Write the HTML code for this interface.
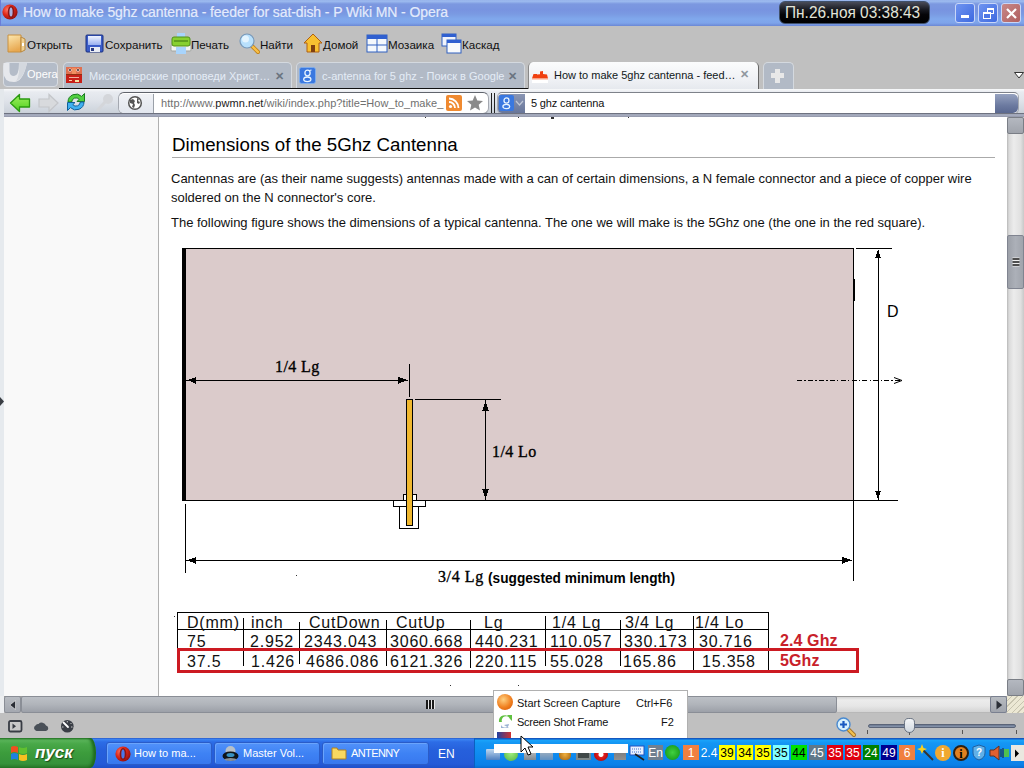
<!DOCTYPE html>
<html><head><meta charset="utf-8">
<style>
*{margin:0;padding:0;box-sizing:border-box}
html,body{width:1024px;height:768px;overflow:hidden;background:#c0c0c0;font-family:"Liberation Sans",sans-serif}
.a{position:absolute}
.nw{white-space:nowrap}
#title{left:0;top:0;width:1024px;height:26px;background:linear-gradient(#98b4ec 0,#9ab8ee 1.5px,#7c98e0 4px,#7894e0 10px,#7a9ae2 14px,#80a8ec 19px,#7ea4ea 23px,#6e8cd8 25.5px)}
#title .t{left:23px;top:4px;font-size:14px;color:#e4ecfc;letter-spacing:-0.1px;-webkit-text-stroke:0.2px #e0e8fc}
.wb{top:3px;width:20px;height:20px;border:1px solid #c8d6f8;border-radius:3px;background:linear-gradient(135deg,#6f94f0,#3e6ae0)}
#toolbar{left:0;top:26px;width:1024px;height:34px;background:#c0c0c0}
.tb{top:12px;font-size:11.6px;color:#101010}
#tabs{left:0;top:60px;width:1024px;height:29px;background:#c0c0c0}
.tab{top:2px;height:26px;border:1px solid #d4d9df;border-bottom:none;border-radius:5px 5px 0 0;background:#b2bac6}
.tab .tt{top:7px;font-size:11px;color:#e4ecf6}
.tab .x{top:7px;font-size:11px;font-weight:bold;color:#6a7480}
#addr{left:0;top:89px;width:1024px;height:28px;background:linear-gradient(#f8f9fa 0,#e8ebf0 3px,#e0e4ea 40%,#d0d6de 75%,#c2c8d2 100%)}
#page{left:0;top:117px;width:1007px;height:579px;background:#fff;overflow:hidden}
#side{left:0;top:0;width:159px;height:580px;background:#f9f9f9;border-right:1px solid #b0b0b0}
#vscroll{left:1007px;top:117px;width:17px;height:579px;background:linear-gradient(90deg,#b8b8b8 0,#dadada 2px,#ececec 40%,#e0e0e0 80%,#c8c8c8)}
#hscroll{left:0;top:696px;width:1024px;height:17px;background:#c0c0c0}
#status{left:0;top:713px;width:1024px;height:25px;background:#c0c0c0}
#task{left:0;top:738px;width:1024px;height:30px;background:linear-gradient(#2a5ac8 0,#3a82f2 1.5px,#2c6ce6 4px,#2660dc 12px,#245ad8 26px,#1e50c8 30px)}
.hd{font-size:18.7px;color:#000}
.p{font-size:13px;color:#111}
.td{font-size:16px;letter-spacing:0.8px;color:#111}
.ser{font-family:"Liberation Serif",serif;font-size:16px;color:#000;-webkit-text-stroke:0.35px #000}
.box{font-size:12px;height:15px;top:7px;text-align:center;line-height:17px;overflow:hidden}
</style></head><body>
<!-- TITLE -->
<div id="title" class="a">
 <div class="a" style="left:0;top:0;width:1px;height:26px;background:#6a7ed8"></div>
 <svg class="a" style="left:2px;top:4px" width="16" height="16"><defs><radialGradient id="ob" cx="0.35" cy="0.35" r="0.7"><stop offset="0" stop-color="#ff7a6a"/><stop offset="0.5" stop-color="#e02818"/><stop offset="1" stop-color="#901010"/></radialGradient></defs><circle cx="8" cy="8" r="7.6" fill="url(#ob)"/><ellipse cx="9" cy="8" rx="3.2" ry="6" fill="#8a1414"/><ellipse cx="9" cy="8" rx="1.6" ry="4.6" fill="#a8b0e0"/></svg>
 <div class="t a nw">How to make 5ghz cantenna - feeder for sat-dish - P Wiki MN - Opera</div>
 <div class="a" style="left:779px;top:1px;width:151px;height:23px;border-radius:6px;background:linear-gradient(#4a4c58,#1a1c24 35%,#050508 60%,#000 100%);border:1px solid #40506a"></div>
 <div class="a nw" style="left:785px;top:2.5px;font-size:16.6px;color:#e2e4d8;transform:scaleX(0.93);transform-origin:0 0">Пн.26.ноя 03:38:43</div>
 <div class="a wb" style="left:955px"><div class="a" style="left:5px;top:11px;width:8px;height:3px;background:#fff"></div></div>
 <div class="a wb" style="left:978px"><div class="a" style="left:8px;top:4px;width:7px;height:6px;border:1px solid #fff;border-top-width:2px"></div><div class="a" style="left:4px;top:8px;width:8px;height:7px;border:1px solid #fff;border-top-width:2px;background:#4e78e6"></div></div>
 <div class="a wb" style="left:1001px;background:linear-gradient(135deg,#c88888,#b06060)"><svg class="a" style="left:3px;top:3px" width="13" height="13"><path d="M2 2L11 11M11 2L2 11" stroke="#fff" stroke-width="2.2"/></svg></div>
</div>
<!-- TOOLBAR -->
<div id="toolbar" class="a">
 <svg class="a" style="left:6px;top:8px" width="20" height="20"><defs><linearGradient id="fd" x1="0" y1="0" x2="0.3" y2="1"><stop offset="0" stop-color="#fce8b0"/><stop offset="1" stop-color="#e8a850"/></linearGradient></defs><path d="M2 1H15V18H2Z" fill="url(#fd)" stroke="#c89040"/><path d="M15 3L19 5V16L15 18Z" fill="#f0d090" stroke="#b88840"/><rect x="16" y="9" width="2" height="3" fill="#fff"/></svg>
 <div class="a tb nw" style="left:27px">Открыть</div>
 <svg class="a" style="left:85px;top:8px" width="20" height="19"><defs><linearGradient id="fl" x1="0" y1="0" x2="0" y2="1"><stop offset="0" stop-color="#f0f4ff"/><stop offset="1" stop-color="#98b0f0"/></linearGradient></defs><rect x="1" y="1" width="17" height="17" rx="1" fill="#3a5cc8" stroke="#1a3080"/><rect x="3" y="2" width="13" height="9" fill="url(#fl)"/><rect x="5" y="13" width="10" height="5" fill="#e8ecf4"/><rect x="6" y="14" width="3" height="3" fill="#2a3a80"/></svg>
 <div class="a tb nw" style="left:105px">Сохранить</div>
 <svg class="a" style="left:170px;top:7px" width="22" height="21"><rect x="7" y="0" width="8" height="6" fill="#a8d4fc"/><rect x="1" y="12" width="20" height="6" rx="1" fill="#f4f4f0" stroke="#a0a4a0"/><rect x="2" y="4" width="18" height="9" rx="2" fill="#88d030" stroke="#509018"/><rect x="4" y="7" width="14" height="2" fill="#60a020"/><rect x="6" y="14" width="10" height="7" fill="#a8d4fc"/></svg>
 <div class="a tb nw" style="left:191px">Печать</div>
 <svg class="a" style="left:238px;top:6px" width="22" height="22"><path d="M14 14L20 20" stroke="#c08018" stroke-width="4" stroke-linecap="round"/><path d="M14 14L20 20" stroke="#f8c048" stroke-width="2.4" stroke-linecap="round"/><circle cx="9" cy="9" r="7" fill="#b8e0fc" stroke="#7898b8" stroke-width="1.2"/><circle cx="7.5" cy="7" r="3.5" fill="#e4f4fe"/></svg>
 <div class="a tb nw" style="left:260px">Найти</div>
 <svg class="a" style="left:303px;top:7px" width="20" height="20"><path d="M10 1L1 10H4V19H16V10H19Z" fill="#f8c030" stroke="#b06010"/><rect x="8" y="12" width="4" height="7" fill="#804010"/></svg>
 <div class="a tb nw" style="left:323px">Домой</div>
 <svg class="a" style="left:366px;top:8px" width="22" height="19"><rect x="1" y="1" width="20" height="17" fill="#f4f8fc" stroke="#3060c0"/><rect x="1" y="1" width="20" height="4" fill="#3060d0"/><path d="M11 5V18M1 11H21" stroke="#3060c0"/></svg>
 <div class="a tb nw" style="left:388px">Мозаика</div>
 <svg class="a" style="left:441px;top:7px" width="21" height="21"><rect x="1" y="1" width="14" height="12" fill="#f0f4fc" stroke="#3060c0"/><rect x="1" y="1" width="14" height="3" fill="#3060d0"/><rect x="6" y="7" width="14" height="13" fill="#f8fafc" stroke="#3060c0"/><rect x="6" y="7" width="14" height="3" fill="#3060d0"/></svg>
 <div class="a tb nw" style="left:462px">Каскад</div>
</div>
<!-- TABS -->
<div id="tabs" class="a">
 <div class="a" style="left:3px;top:2px;width:55px;height:25px;border:1px solid #d8dce2;border-radius:4px;background:#b4bcc8"></div>
 <svg class="a" style="left:3px;top:3px" width="24" height="20"><path d="M0.5 0V9Q0.5 19 11 19Q19 19 23 4L24 0H16Q16 13 11 13Q6.5 13 6.5 8V0Z" fill="#e6e8ec"/><path d="M16 0H24L23 4Q20 15 13 18.5Q17 12 16 0Z" fill="#d4d8de"/></svg>
 <div class="a nw" style="left:27px;top:8px;font-size:11px;color:#fff">Opera</div>
 <div class="a tab" style="left:63px;width:229px"><svg class="a" style="left:2px;top:4px" width="17" height="17"><rect width="16" height="16" fill="#c84028"/><rect x="0" y="0" width="16" height="8" fill="#e07050"/><rect x="6" y="1" width="4" height="7" fill="#f09060"/><circle cx="4" cy="3" r="1.6" fill="#fff"/><circle cx="12" cy="3" r="1.6" fill="#fff"/><circle cx="4" cy="3" r="0.9" fill="#200808"/><circle cx="12" cy="3" r="0.9" fill="#200808"/><rect x="0" y="8" width="16" height="8" fill="#c82018"/><rect x="3" y="10" width="10" height="1" fill="#f0b0a0"/><rect x="3" y="13" width="3" height="1" fill="#f8d0b0"/><rect x="9" y="13" width="4" height="2" fill="#f8e0a0"/><rect x="0" y="7" width="16" height="1" fill="#903010"/></svg><div class="a tt nw" style="left:25px">Миссионерские проповеди Христ…</div><div class="a x" style="left:211px">✕</div></div>
 <div class="a tab" style="left:296px;width:229px"><svg class="a" style="left:2px;top:4px" width="17" height="17"><rect x="0.5" y="0.5" width="16" height="16" rx="2" fill="#3a78e0" stroke="#80b0f0" stroke-width="0.8"/><ellipse cx="8.5" cy="6" rx="2.6" ry="2.8" fill="none" stroke="#e8f4ff" stroke-width="1.3"/><ellipse cx="8.3" cy="12.3" rx="3.6" ry="2.3" fill="none" stroke="#e8f4ff" stroke-width="1.3"/><path d="M10.5 3.5L12.5 3" stroke="#e8f4ff" stroke-width="1.2"/></svg><div class="a tt nw" style="left:25px">c-antenna for 5 ghz - Поиск в Google</div><div class="a x" style="left:211px">✕</div></div>
 <div class="a" style="left:59px;top:28px;width:470px;height:1px;background:#101010"></div>
 <div class="a" style="left:528px;top:2px;width:231px;height:27px;border-radius:5px 5px 0 0;background:linear-gradient(#fbfcfd,#eef0f4 70%,#e6e9ee);border-left:1px solid #888;border-right:1px solid #666"></div>
 <svg class="a" style="left:532px;top:10px" width="16" height="14"><rect x="0" y="8" width="16" height="5" fill="#fff"/><path d="M0 8.5L1.5 4H5V4.5L8 4.2V1.5L11 1V4L15 4.5L16 8.5Z" fill="#f04010"/><path d="M0 8.5H16V9.5H0Z" fill="#f8a080"/></svg>
 <div class="a nw" style="left:554px;top:9px;font-size:11px;color:#101820">How to make 5ghz cantenna - feed…</div>
 <div class="a" style="left:740px;top:8px;font-size:11px;font-weight:bold;color:#9098a0">✕</div>
 <div class="a" style="left:763px;top:2px;width:31px;height:27px;border:1px solid #d4d9df;border-bottom:none;border-radius:5px 5px 0 0;background:#b2bac6"></div>
 <div class="a" style="left:775px;top:9px;width:5px;height:14px;background:#e8e8e8"></div>
 <div class="a" style="left:771px;top:13px;width:13px;height:5px;background:#e8e8e8"></div>
 <svg class="a" style="left:1014px;top:12px" width="10" height="7"><path d="M0.5 0.5H9.5L5 6Z" fill="#fff" stroke="#333"/></svg>
</div>
<!-- ADDRESS -->
<div id="addr" class="a">
 <div class="a" style="left:0;top:0;width:4px;height:28px;background:#e4e8ec"></div>
 <svg class="a" style="left:9px;top:4px" width="24" height="20"><defs><linearGradient id="bk" x1="0" y1="0" x2="0" y2="1"><stop offset="0" stop-color="#a0f060"/><stop offset="1" stop-color="#50d020"/></linearGradient></defs><path d="M1.5 10L10.5 1.5V6H20.5V14H10.5V18.5Z" fill="url(#bk)" stroke="#2a9a10" stroke-width="1.3" stroke-linejoin="round"/></svg>
 <svg class="a" style="left:36px;top:4px" width="24" height="20"><path d="M22 10L13 1.5V6H3V14H13V18.5Z" fill="#d8dadd" stroke="#c4c6ca" stroke-width="1.2"/></svg>
 <svg class="a" style="left:66px;top:3px" width="20" height="20"><path d="M2 10A8 8 0 0 1 15.6 4.4L18.5 1.5V9.5H11L13.2 7.3A4.3 4.3 0 0 0 5.7 10Z" fill="#50d040" stroke="#1a7a20" stroke-width="1"/><path d="M18 10A8 8 0 0 1 4.4 15.6L1.5 18.5V10.5H9L6.8 12.7A4.3 4.3 0 0 0 14.3 10Z" fill="#40b0f0" stroke="#10609a" stroke-width="1"/></svg>
 <svg class="a" style="left:95px;top:3px" width="20" height="21"><circle cx="13" cy="7" r="5" fill="#d4d6da"/><path d="M10 10L2 19" stroke="#d4d6da" stroke-width="3"/></svg>
 <div class="a" style="left:118px;top:3px;width:371px;height:22px;border-radius:6px;background:#fff;border:1px solid #a4a8b0;border-top:1px solid #60646c"></div>
 <div class="a" style="left:119px;top:5px;width:35px;height:19px;border-radius:5px 0 0 5px;background:linear-gradient(#f0f2f6,#e2e6ee);border-right:1px solid #9aa0a8"></div>
 <svg class="a" style="left:127px;top:6px" width="16" height="16"><circle cx="8" cy="8" r="6.3" fill="#fff" stroke="#555" stroke-width="1.5"/><path d="M3 5L6 4L8 6L7 8L8 10L7 13L5 12L6 9L3 8Z" fill="#555"/><path d="M10 3L12 4L11 6L13 7L12 9L10 8Z" fill="#555"/></svg>
 <div class="a nw" style="left:161px;top:8px;font-size:11px;letter-spacing:0.05px;color:#707070">http://www.<span style="color:#202020">pwmn.net</span>/wiki/index.php?title=How_to_make_</div>
 <div class="a" style="left:446px;top:6px;width:16px;height:16px;border-radius:2px;background:#f08a30"></div>
 <svg class="a" style="left:446px;top:6px" width="16" height="16"><circle cx="4.5" cy="11.5" r="1.6" fill="#fff"/><path d="M3 7A6 6 0 0 1 9 13M3 3.5A9.5 9.5 0 0 1 12.5 13" fill="none" stroke="#fff" stroke-width="1.8"/></svg>
 <svg class="a" style="left:466px;top:5px" width="18" height="18"><path d="M9 1L11.3 6.5L17 7L12.7 10.8L14 16.5L9 13.5L4 16.5L5.3 10.8L1 7L6.7 6.5Z" fill="#8a8a8a"/></svg>
 <div class="a" style="left:491px;top:4px;width:1px;height:20px;background:#222"></div>
 <div class="a" style="left:494px;top:4px;width:1px;height:20px;background:#222"></div>
 <div class="a" style="left:497px;top:3px;width:522px;height:22px;border-radius:5px;background:#fff;border:1px solid #a4a8b0;border-top:1px solid #7e828a"></div>
 <div class="a" style="left:498px;top:5px;width:27px;height:19px;border-radius:4px 0 0 4px;background:linear-gradient(#8a96b4,#68769a)"></div>
 <svg class="a" style="left:499px;top:6px" width="16" height="16"><rect x="0" y="0" width="15" height="16" rx="2" fill="#3a78e0"/><ellipse cx="7.5" cy="5.5" rx="2.5" ry="2.6" fill="none" stroke="#e8f4ff" stroke-width="1.3"/><ellipse cx="7.3" cy="11.5" rx="3.4" ry="2.2" fill="none" stroke="#e8f4ff" stroke-width="1.3"/></svg>
 <svg class="a" style="left:515px;top:11px" width="9" height="6"><path d="M1 1L4.5 5L8 1" fill="none" stroke="#c0c8d8" stroke-width="1.2"/></svg>
 <div class="a nw" style="left:531px;top:8px;font-size:11px;letter-spacing:-0.15px;color:#101010">5 ghz cantenna</div>
 <div class="a" style="left:995px;top:5px;width:23px;height:19px;border-radius:0 5px 5px 0;background:linear-gradient(#96a2c0,#6c7aa0 60%,#5a6890)"></div>
 <div class="a" style="left:4px;top:24px;width:1020px;height:4px;background:linear-gradient(#6e7280 0,#6e7280 1px,#a0a6b8 1px,#a6abbe 3px,#8a8ea0 4px)"></div>
</div>
<!-- PAGE -->
<div id="page" class="a">
 <div id="side" class="a"></div>
 <div class="a" style="left:0;top:0;width:4px;height:580px;background:#e6eaee"></div>
 <svg class="a" style="left:0;top:280px" width="5" height="9"><path d="M0 0L4 4.5L0 9Z" fill="#3a3e44"/></svg>
 <div class="a hd nw" style="left:172px;top:17px">Dimensions of the 5Ghz Cantenna</div>
 <div class="a" style="left:172px;top:40px;width:823px;height:1px;background:#aaa"></div>
 <div class="a p nw" style="left:171px;top:54px">Cantennas are (as their name suggests) antennas made with a can of certain dimensions, a N female connector and a piece of copper wire</div>
 <div class="a p nw" style="left:171px;top:73px">soldered on the N connector's core.</div>
 <div class="a p nw" style="left:171px;top:98px">The following figure shows the dimensions of a typical cantenna. The one we will make is the 5Ghz one (the one in the red square).</div>
 <div class="a" style="left:410px;top:152px;width:1px;height:1px;background:#333"></div><div class="a" style="left:413px;top:155px;width:1px;height:1px;background:#333"></div><div class="a" style="left:668px;top:168px;width:1px;height:1px;background:#333"></div><div class="a" style="left:296px;top:458px;width:1px;height:1px;background:#333"></div><div class="a" style="left:174px;top:499px;width:1px;height:1px;background:#333"></div><div class="a" style="left:450px;top:568px;width:1px;height:1px;background:#333"></div><div class="a" style="left:518px;top:568px;width:1px;height:1px;background:#333"></div><div class="a" style="left:425px;top:0px;width:1px;height:1px;background:#333"></div><div class="a" style="left:518px;top:0px;width:1px;height:1px;background:#333"></div><div class="a" style="left:551px;top:0px;width:3px;height:2px;background:#333"></div><div class="a" style="left:628px;top:0px;width:1px;height:1px;background:#333"></div>
 <!-- DIAGRAM -->
 <svg class="a" style="left:0;top:0" width="1007" height="580" shape-rendering="crispEdges">
  <g transform="translate(0,-117)">
  <rect x="182" y="248" width="672" height="253" fill="#dbcbcb"/>
  <rect x="182" y="248" width="4" height="253" fill="#000"/>
  <rect x="182" y="248" width="672" height="1" fill="#000"/>
  <rect x="856" y="248" width="36" height="1" fill="#000"/>
  <rect x="853" y="249" width="1" height="332" fill="#000"/>
  <rect x="853" y="279" width="2" height="22" fill="#000"/>
  <rect x="182" y="500" width="716" height="1" fill="#000"/>
  <rect x="878" y="250" width="1" height="250" fill="#000"/>
  <path d="M875 258H881L878 250Z" fill="#000"/>
  <path d="M875 491H881L878 499Z" fill="#000"/>
  <path d="M797 380.5H902" stroke="#000" stroke-dasharray="5,2.2,1.5,2.2" stroke-width="1"/>
  <path d="M894 377.5L902 380.5L894 383.5" fill="none" stroke="#000" stroke-width="1" shape-rendering="auto"/>
  <rect x="186" y="380" width="222" height="1" fill="#000"/>
  <path d="M188 380L196 377V384Z" fill="#000"/>
  <path d="M407 380L398 377V384Z" fill="#000"/>
  <rect x="409" y="364" width="1" height="33" fill="#000"/>
  <rect x="415" y="399" width="86" height="1" fill="#000"/>
  <rect x="485" y="400" width="1" height="100" fill="#000"/>
  <path d="M482 411H489L485.5 401Z" fill="#000"/>
  <path d="M482 489H489L485.5 499Z" fill="#000"/>
  <rect x="403" y="494" width="13" height="7" fill="#fff" stroke="#000"/>
  <rect x="393.5" y="500.5" width="32" height="6" fill="#fff" stroke="#000"/>
  <rect x="399.5" y="506.5" width="19" height="22" fill="#fff" stroke="#000"/>
  <rect x="406.5" y="399.5" width="6" height="126" fill="#f0b830" stroke="#000"/>
  <rect x="185" y="504" width="1" height="69" fill="#000"/>
  <rect x="186" y="560" width="666" height="1" fill="#000"/>
  <path d="M187 560L196 557V564Z" fill="#000"/>
  <path d="M851 560L842 557V564Z" fill="#000"/>
  </g>
 </svg>
 <div class="a ser nw" style="left:275px;top:241px;letter-spacing:0.4px">1/4 Lg</div>
 <div class="a ser nw" style="left:492px;top:326px;letter-spacing:0.4px">1/4 Lo</div>
 <div class="a nw" style="left:887px;top:186px;font-size:16px;color:#000">D</div>
 <div class="a ser nw" style="left:438px;top:451px;letter-spacing:0.6px">3/4 Lg</div>
 <div class="a nw" style="left:488px;top:452px;font-size:15px;font-weight:bold;color:#000;transform:scaleX(0.912);transform-origin:0 0">(suggested minimum length)</div>
 <!-- TABLE -->
 <svg class="a" style="left:0;top:0" width="1007" height="580" shape-rendering="crispEdges">
  <g transform="translate(0,-117)" fill="#000">
  <rect x="177" y="612" width="592" height="1" />
  <rect x="178" y="629" width="590" height="1" />
  <rect x="177" y="612" width="1" height="60" />
  <rect x="243" y="618" width="1" height="48" />
  <rect x="299" y="622" width="1" height="42" />
  <rect x="386" y="620" width="1" height="46" />
  <rect x="470" y="620" width="1" height="48" />
  <rect x="545" y="616" width="1" height="50" />
  <rect x="620" y="620" width="1" height="46" />
  <rect x="693" y="616" width="1" height="56" />
  <rect x="768" y="612" width="1" height="60" />
  <rect x="693" y="671" width="76" height="1" />
  <rect x="177" y="648" width="682" height="3" fill="#cc1a22"/>
  <rect x="177" y="670" width="682" height="3" fill="#cc1a22"/>
  <rect x="177" y="648" width="3" height="25" fill="#cc1a22"/>
  <rect x="856" y="648" width="3" height="25" fill="#cc1a22"/>
  </g>
 </svg>
 <div class="a td nw" style="left:187px;top:497px">D(mm)</div>
 <div class="a td nw" style="left:251px;top:497px">inch</div>
 <div class="a td nw" style="left:309px;top:497px">CutDown</div>
 <div class="a td nw" style="left:396px;top:497px">CutUp</div>
 <div class="a td nw" style="left:484px;top:497px">Lg</div>
 <div class="a td nw" style="left:552px;top:497px">1/4 Lg</div>
 <div class="a td nw" style="left:625px;top:497px">3/4 Lg</div>
 <div class="a td nw" style="left:695px;top:497px">1/4 Lo</div>
 <div class="a td nw" style="left:187px;top:516px">75</div>
 <div class="a td nw" style="left:250px;top:516px">2.952</div>
 <div class="a td nw" style="left:304px;top:516px">2343.043</div>
 <div class="a td nw" style="left:390px;top:516px">3060.668</div>
 <div class="a td nw" style="left:475px;top:516px">440.231</div>
 <div class="a td nw" style="left:550px;top:516px">110.057</div>
 <div class="a td nw" style="left:624px;top:516px">330.173</div>
 <div class="a td nw" style="left:699px;top:516px">30.716</div>
 <div class="a td nw" style="left:187px;top:536px">37.5</div>
 <div class="a td nw" style="left:251px;top:536px">1.426</div>
 <div class="a td nw" style="left:306px;top:536px">4686.086</div>
 <div class="a td nw" style="left:390px;top:536px">6121.326</div>
 <div class="a td nw" style="left:475px;top:536px">220.115</div>
 <div class="a td nw" style="left:550px;top:536px">55.028</div>
 <div class="a td nw" style="left:623px;top:536px">165.86</div>
 <div class="a td nw" style="left:702px;top:536px">15.358</div>
 <div class="a nw" style="left:780px;top:514.5px;font-size:16px;font-weight:bold;letter-spacing:0.1px;color:#c8202a">2.4 Ghz</div>
 <div class="a nw" style="left:780px;top:535px;font-size:16px;font-weight:bold;letter-spacing:0.1px;color:#c8202a">5Ghz</div>
</div>
<!-- VSCROLL -->
<div id="vscroll" class="a">
 <div class="a" style="left:0;top:0;width:17px;height:17px;border-radius:2px;background:linear-gradient(#b4b8c0,#a0a4ac);border:1px solid #7a7e86"></div>
 <div class="a" style="left:0;top:118px;width:17px;height:54px;border-radius:2px;background:linear-gradient(90deg,#9ca0a8,#acb0b8 50%,#a0a4ac);border:1px solid #808490"></div>
 <svg class="a" style="left:4px;top:140px" width="10" height="10"><path d="M1.5 2H8.5M1.5 5H8.5M1.5 8H8.5" stroke="#f0f0f0" stroke-width="3"/><path d="M1.5 2H8.5M1.5 5H8.5M1.5 8H8.5" stroke="#1a1a1a" stroke-width="1.6"/></svg>
 <div class="a" style="left:0;top:562px;width:17px;height:17px;border-radius:2px;background:linear-gradient(#b4b8c0,#a0a4ac);border:1px solid #7a7e86"></div>
</div>
<!-- HSCROLL -->
<div id="hscroll" class="a">
 <div class="a" style="left:0;top:0;width:4px;height:17px;background:#eceef0"></div>
 <div class="a" style="left:4px;top:0;width:1003px;height:17px;background:linear-gradient(#d4d4d4,#ececec 20%,#e6e6e6 60%,#d4d4d4);border-top:1px solid #9a9a9a;border-bottom:1px solid #b8b8b8"></div>
 <div class="a" style="left:4px;top:0;width:17px;height:17px;border-radius:2px;background:linear-gradient(#b8bcc2,#a4a8b0);border:1px solid #8a8e96"></div>
 <svg class="a" style="left:9px;top:4px" width="8" height="10"><path d="M6.5 0.5V9.5L0.8 5Z" fill="#2a2e36" stroke="#f0f0f0" stroke-width="0.6"/></svg>
 <div class="a" style="left:21px;top:0;width:816px;height:17px;border-radius:2px;background:linear-gradient(#bcc0c6,#b0b4ba 50%,#9ca0a8);border:1px solid #8a8e96"></div>
 <div class="a" style="left:426px;top:4px;width:9px;height:9px;background:repeating-linear-gradient(90deg,#1a1a1a 0 2px,#e8e8e8 2px 3px)"></div>
 <div class="a" style="left:990px;top:0;width:17px;height:17px;border-radius:2px;background:linear-gradient(#b8bcc2,#a0a4ac);border:1px solid #7a8090"></div>
 <svg class="a" style="left:995px;top:4px" width="8" height="10"><path d="M1.5 0.5V9.5L7.2 5Z" fill="#2a2e36"/></svg>
 <div class="a" style="left:1007px;top:0;width:17px;height:17px;background:repeating-linear-gradient(135deg,#ece8d4 0 3px,#c8c4b0 3px 4px)"></div>
</div>
<!-- STATUS -->
<div id="status" class="a">
 <svg class="a" style="left:8px;top:7px" width="15" height="13"><rect x="1" y="1" width="12.5" height="10.5" rx="1.5" fill="#c8c8c8" stroke="#383c44" stroke-width="1.8"/><path d="M4.5 3.5V9L8 6.2Z" fill="#383c44"/></svg>
 <svg class="a" style="left:33px;top:7px" width="16" height="12"><path d="M3.5 11A3 3 0 0 1 2.5 5.5A2.8 2.8 0 0 1 5.5 4A4.5 4.5 0 0 1 13 5.5A2.8 2.8 0 0 1 13 11Z" fill="#4a5058"/></svg>
 <svg class="a" style="left:60px;top:6px" width="15" height="15"><circle cx="7.3" cy="7.3" r="6.3" fill="#3a3e46"/><path d="M3.5 3.5L8 8" stroke="#fff" stroke-width="1.8" stroke-linecap="round"/><path d="M7.3 2V3.5M11.5 4L10.5 5M12.5 8H11M2 8H3.5" stroke="#c8c8c8" stroke-width="1"/></svg>
 <svg class="a" style="left:835px;top:3px" width="22" height="22"><path d="M13 13L19 19" stroke="#a07020" stroke-width="4" stroke-linecap="round"/><path d="M13 13L19 19" stroke="#f0c050" stroke-width="2.4" stroke-linecap="round"/><circle cx="8.5" cy="8.5" r="6.5" fill="#d8f0fc" stroke="#4a8ad0" stroke-width="1.4"/><path d="M5 8.5H12M8.5 5V12" stroke="#1a5ac0" stroke-width="2.2"/></svg>
 <div class="a" style="left:868px;top:11px;width:148px;height:4px;border-radius:2px;background:linear-gradient(#6a7890,#8a98b0);border:1px solid #5a6478"></div>
 <div class="a" style="left:867px;top:17px;width:1px;height:4px;background:#555"></div>
 <div class="a" style="left:1016px;top:17px;width:1px;height:4px;background:#555"></div><div class="a" style="left:962px;top:17px;width:1px;height:4px;background:#555"></div><div class="a" style="left:909px;top:19px;width:1px;height:3px;background:#555"></div>
 <div class="a" style="left:904px;top:5px;width:11px;height:15px;border-radius:5px 5px 6px 6px;background:linear-gradient(#f4f6f8,#d0d8e0);border:1px solid #6a7484"></div>
</div>
<!-- MENU -->
<div class="a" style="left:493px;top:690px;width:195px;height:60px;background:#fff;border:1px solid #b0b0b0"></div>
<div class="a" style="left:497px;top:694px;width:16px;height:16px;border-radius:50%;background:radial-gradient(circle at 40% 35%,#ffd080,#f08020 55%,#d05000)"></div>
<div class="a nw" style="left:517px;top:697px;font-size:11px;color:#111">Start Screen Capture</div>
<div class="a nw" style="left:636px;top:697px;font-size:11px;color:#111">Ctrl+F6</div>
<svg class="a" style="left:496px;top:713px" width="18" height="16"><path d="M3 9A6 6 0 0 1 14 5L11 2H16V8L14 6A4 4 0 0 0 6 9Z" fill="#60c040"/><path d="M5 10A4 4 0 0 0 13 11L8 12L13 15H5Z" fill="#7090c0" opacity="0.7"/></svg>
<div class="a nw" style="left:517px;top:716px;font-size:11px;letter-spacing:-0.25px;color:#111">Screen Shot Frame</div>
<div class="a nw" style="left:661px;top:716px;font-size:11px;color:#111">F2</div>
<div class="a" style="left:497px;top:732px;width:14px;height:8px;background:linear-gradient(90deg,#2040a0,#d03030)"></div>
<!-- TASKBAR -->
<div id="task" class="a">
 <div class="a" style="left:0;top:0;width:96px;height:30px;border-radius:0 6px 6px 0 / 0 15px 15px 0;background:linear-gradient(#2a7a2a 0,#5ab45a 2px,#48a848 6px,#3c9c3c 50%,#36923a 85%,#2a7a2a);box-shadow:inset -3px 0 3px #1e6a1e"></div>
 <svg class="a" style="left:9px;top:6px" width="20" height="19"><path d="M2 3Q5 1 9 3V9Q5 7 2 9Z" fill="#f05020"/><path d="M10 3Q14 5 18 3V9Q14 11 10 9Z" fill="#60c030"/><path d="M2 10Q5 8 9 10V16Q5 14 2 16Z" fill="#2080e0"/><path d="M10 10Q14 12 18 10V16Q14 18 10 16Z" fill="#f8c020"/></svg>
 <div class="a nw" style="left:35px;top:5px;font-size:17px;font-weight:bold;font-style:italic;color:#fff;text-shadow:1px 1px 1px #1a4a1a">пуск</div>
 <div class="a" style="left:106px;top:4px;width:106px;height:23px;border-radius:3px;background:linear-gradient(#5292fa,#3e82f4 50%,#3878ee);border:1px solid #2a5cc8;box-shadow:inset 1px 1px 0 #6aa4fc"></div>
 <svg class="a" style="left:115px;top:8px" width="16" height="16"><circle cx="8" cy="8" r="7.6" fill="url(#ob)"/><ellipse cx="8" cy="8" rx="3.4" ry="6" fill="#8a1414"/><ellipse cx="8" cy="8" rx="1.7" ry="4.6" fill="#4a78e8"/></svg>
 <div class="a nw" style="left:134px;top:9px;font-size:11px;color:#fff">How to ma...</div>
 <div class="a" style="left:214px;top:4px;width:106px;height:23px;border-radius:3px;background:linear-gradient(#5292fa,#3e82f4 50%,#3878ee);border:1px solid #2a5cc8;box-shadow:inset 1px 1px 0 #6aa4fc"></div>
 <svg class="a" style="left:222px;top:7px" width="17" height="17"><ellipse cx="8.5" cy="6" rx="5" ry="5" fill="#b8c0c8"/><ellipse cx="8.5" cy="11" rx="8" ry="4.5" fill="#101418"/><ellipse cx="8.5" cy="10" rx="4" ry="2" fill="#3890c0"/><ellipse cx="8.5" cy="14.5" rx="6" ry="1.5" fill="#8a9098"/></svg>
 <div class="a nw" style="left:243px;top:9px;font-size:11px;color:#fff">Master Vol...</div>
 <div class="a" style="left:322px;top:4px;width:107px;height:23px;border-radius:3px;background:linear-gradient(#5292fa,#3e82f4 50%,#3878ee);border:1px solid #2a5cc8;box-shadow:inset 1px 1px 0 #6aa4fc"></div>
 <svg class="a" style="left:331px;top:8px" width="16" height="14"><path d="M1 2H6L7 4H15V13H1Z" fill="#f8d860" stroke="#b08020"/></svg>
 <div class="a nw" style="left:351px;top:9px;font-size:11px;letter-spacing:-0.6px;color:#fff">ANTENNY</div>
 <div class="a nw" style="left:438px;top:9px;font-size:12px;color:#fff">EN</div>
 <div class="a" style="left:474px;top:0;width:550px;height:30px;background:linear-gradient(#1458c0 0,#1458c0 1px,#1aa4fa 2px,#1496f4 5px,#0f8cf0 50%,#0a80e8 90%,#0a6cd0);border-left:1px solid #0a60c0"></div>
 <div class="a" style="left:486px;top:11px;width:14px;height:11px;background:linear-gradient(#c0d8f0,#5080c0);border-radius:1px"></div>
 <div class="a" style="left:504px;top:10px;width:14px;height:13px;border-radius:50%;background:radial-gradient(circle at 50% 40%,#a0f080,#50b040)"></div>
 <div class="a" style="left:524px;top:11px;width:12px;height:11px;background:linear-gradient(#c8c8c8,#808890)"></div>
 <div class="a" style="left:540px;top:11px;width:13px;height:11px;background:linear-gradient(#b0b8c0,#6090c0)"></div>
 <div class="a" style="left:559px;top:11px;width:12px;height:11px;border-radius:40%;background:radial-gradient(circle,#f0b040,#a06010)"></div>
 <div class="a" style="left:576px;top:11px;width:15px;height:11px;background:#404848;border:2px solid #808888;border-top-color:#208040"></div>
 <div class="a" style="left:594px;top:10px;width:14px;height:13px;border-radius:50%;background:radial-gradient(circle at 50% 50%,#fff 0 2px,#e02020 3px,#a00000)"></div>
 <div class="a" style="left:614px;top:11px;width:12px;height:11px;background:linear-gradient(#c04040,#808080 40%,#909090)"></div>
 <svg class="a" style="left:629px;top:6px" width="17" height="17"><rect x="1" y="2" width="14" height="9" fill="#e8f0ff" stroke="#2050c0"/><path d="M3 5H13M3 8H13" stroke="#4070d0" stroke-dasharray="1,1"/><path d="M6 10L15 16" stroke="#202020" stroke-width="1.6"/></svg>
 <div class="a" style="left:494px;top:6px;width:134px;height:9px;background:#fff"></div>
 <svg class="a" style="left:520px;top:-3px" width="16" height="22"><path d="M1 1V17L5 13L8 20L11 19L8 12H13Z" fill="#fff" stroke="#000"/></svg>
 <div class="a box" style="left:648px;width:15px;background:#708090;color:#fff">En</div>
 <div class="a" style="left:665px;top:7px;width:15px;height:15px;border-radius:50%;background:radial-gradient(circle,#40d040,#109010)"></div>
 <div class="a box" style="left:683px;width:16px;background:#f08040;color:#fff">1</div>
 <div class="a box" style="left:700px;width:18px;color:#fff">2.4</div>
 <div class="a box" style="left:719px;width:16px;background:#ffff00;color:#000">39</div>
 <div class="a box" style="left:737px;width:16px;background:#ffff00;color:#000">34</div>
 <div class="a box" style="left:755px;width:16px;background:#ffff00;color:#000">35</div>
 <div class="a box" style="left:773px;width:16px;background:#80ffff;color:#000">35</div>
 <div class="a box" style="left:791px;width:16px;background:#00e000;color:#000">44</div>
 <div class="a box" style="left:809px;width:16px;background:#607888;color:#fff">45</div>
 <div class="a box" style="left:827px;width:16px;background:#e00010;color:#fff">35</div>
 <div class="a box" style="left:845px;width:16px;background:#e00010;color:#fff">35</div>
 <div class="a box" style="left:863px;width:16px;background:#008000;color:#fff">24</div>
 <div class="a box" style="left:881px;width:16px;background:#000090;color:#fff">49</div>
 <div class="a box" style="left:899px;width:16px;background:#f08040;color:#fff">6</div>
 <svg class="a" style="left:917px;top:6px" width="17" height="18"><path d="M6 6L16 16" stroke="#333" stroke-width="2"/><path d="M5 0L6.5 4L10 5L6.5 6.5L5 10L3.5 6.5L0 5L3.5 4Z" fill="#f8d020"/></svg>
 <div class="a" style="left:935px;top:7px;width:16px;height:16px;border-radius:50%;background:#f0a830;color:#fff;font:bold 12px 'Liberation Serif';text-align:center;line-height:16px">i</div>
 <div class="a" style="left:953px;top:7px;width:16px;height:16px;border-radius:50%;background:#e08020;color:#000;font:bold 12px 'Liberation Serif';text-align:center;line-height:14px;border:2px solid #302010">i</div>
 <svg class="a" style="left:972px;top:6px" width="14" height="17"><path d="M7 1L13 3V9Q13 14 7 16Q1 14 1 9V3Z" fill="#60b0e8" stroke="#2060a0"/><text x="4" y="12" font-size="10" font-weight="bold" fill="#fff" font-family="Liberation Sans">?</text></svg>
 <svg class="a" style="left:989px;top:7px" width="15" height="16"><path d="M1 5H5L10 1V15L5 11H1Z" fill="#e06030" stroke="#603020"/><path d="M12 4V12M14 3V13" stroke="#222" stroke-width="1"/></svg>
 <div class="a" style="left:1004px;top:11px;width:5px;height:8px;background:#50c050"></div>
 <div class="a" style="left:1011px;top:7px;width:13px;height:16px;background:#eae8e0"></div>
 <svg class="a" style="left:1014px;top:11px" width="6" height="9"><path d="M1 0.5V8.5L5 4.5Z" fill="#000"/></svg>
</div>
</body></html>
